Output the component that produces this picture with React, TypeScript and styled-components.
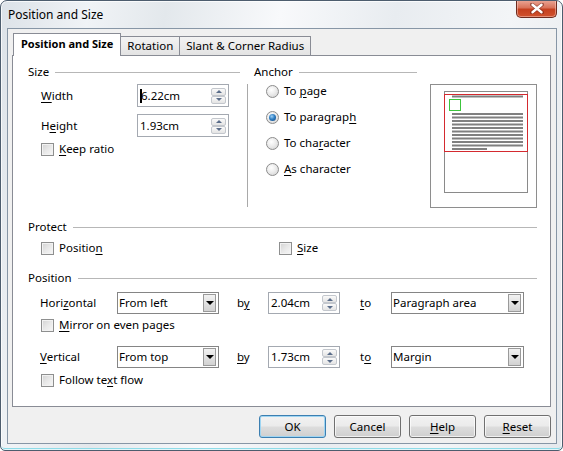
import React from 'react';
import styled, { createGlobalStyle } from 'styled-components';

const GlobalStyle = createGlobalStyle`
  html, body { margin: 0; padding: 0; background: #ffffff; }
  body {
    font-family: "Noto Sans", "Open Sans", sans-serif;
    font-size: 11.5px;
    color: #000;
  }
  * { box-sizing: border-box; }
  u { text-decoration-thickness: 1px; text-underline-offset: 2px; }
`;

const Window = styled.div`
  width: 563px;
  height: 451px;
  border: 1px solid #4d5d6e;
  border-radius: 7px 7px 5px 5px;
  background: linear-gradient(100deg, #dce2e8 0%, #f0f3f6 14%, #e3e8ec 26%, #f8f9fb 44%, #e8ecf0 62%, #f3f5f7 80%, #e5e9ed 100%);
  box-shadow: inset 0 0 0 1px rgba(255, 255, 255, 0.75), inset 0 -2px 0 #8edbe8;
  display: flex;
  flex-direction: column;
  padding: 0 5px 6px 6px;
  overflow: hidden;
`;

const TitleBar = styled.div`
  height: 27px;
  display: flex;
  align-items: flex-start;
  justify-content: space-between;
  padding-left: 1px;
`;

const Title = styled.div`
  margin-top: 6px;
  font-size: 12px;
  line-height: 16px;
  color: #000;
`;

const CloseButton = styled.div`
  width: 41px;
  height: 18px;
  margin-top: -1px;
  border: 1px solid #6e2b1f;
  border-top: none;
  border-radius: 0 0 5px 5px;
  background: linear-gradient(#eba898 0%, #d9735a 45%, #c5401f 55%, #d0522e 100%);
  box-shadow: inset 0 0 0 1px rgba(255, 220, 210, 0.45);
  display: flex;
  align-items: center;
  justify-content: center;
`;

const Client = styled.div`
  flex: 1;
  border: 1px solid #8796a6;
  background: #f0f0f0;
  display: flex;
  flex-direction: column;
  padding: 4px 5px 5px 4px;
`;

const TabRow = styled.div`
  display: flex;
  align-items: flex-end;
  height: 22px;
  padding-left: 1px;
`;

const Tab = styled.div<{ $active?: boolean }>`
  position: relative;
  z-index: ${(p) => (p.$active ? 2 : 1)};
  height: ${(p) => (p.$active ? '23px' : '19px')};
  margin-bottom: ${(p) => (p.$active ? '-1px' : '0')};
  margin-left: ${(p) => (p.$active ? '0' : '-1px')};
  padding: 0 ${(p) => (p.$active ? '7px' : '6px')};
  border: 1px solid #898c95;
  border-bottom: none;
  background: ${(p) => (p.$active ? '#ffffff' : 'linear-gradient(#f3f3f3, #e3e3e3)')};
  font-weight: ${(p) => (p.$active ? 700 : 400)};
  font-size: ${(p) => (p.$active ? '11px' : '11.5px')};
  display: flex;
  align-items: center;
  line-height: 16px;
  white-space: nowrap;
  padding-bottom: ${(p) => (p.$active ? '2px' : '0')};
`;

const Pane = styled.div`
  height: 352px;
  border: 1px solid #898c95;
  background: #ffffff;
  padding: 8px 13px 0 15px;
  display: flex;
  flex-direction: column;
`;

const Header = styled.div<{ $mt?: number }>`
  display: flex;
  align-items: center;
  gap: 6px;
  height: 16px;
  line-height: 16px;
  margin-top: ${(p) => p.$mt ?? 0}px;
  white-space: nowrap;
  &::after {
    content: '';
    flex: 1;
    height: 1px;
    background: #b7b7b7;
  }
`;

const TopArea = styled.div`
  display: flex;
  align-items: flex-start;
  height: 143px;
`;

const SizeColumn = styled.div`
  width: 212px;
  display: flex;
  flex-direction: column;
`;

const FieldRow = styled.div<{ $mt: number }>`
  display: flex;
  align-items: center;
  height: 23px;
  margin-top: ${(p) => p.$mt}px;
`;

const FieldLabel = styled.div<{ $w: number; $pl: number }>`
  width: ${(p) => p.$w}px;
  padding-left: ${(p) => p.$pl}px;
  line-height: 16px;
  white-space: nowrap;
`;

const VSeparator = styled.div`
  width: 1px;
  height: 123px;
  margin: 20px 6px 0 7px;
  background: #a9a9a9;
`;

const AnchorColumn = styled.div`
  width: 163px;
  display: flex;
  flex-direction: column;
`;

const RadioList = styled.div`
  display: flex;
  flex-direction: column;
  gap: 8px;
  margin-top: 2px;
  padding-left: 12px;
`;

const OptionRow = styled.div<{ $mt?: number; $pl?: number }>`
  display: flex;
  align-items: center;
  gap: 5px;
  height: 18px;
  margin-top: ${(p) => p.$mt ?? 0}px;
  padding-left: ${(p) => p.$pl ?? 0}px;
  line-height: 16px;
  white-space: nowrap;
`;

const RadioCircle = styled.span<{ $on?: boolean }>`
  width: 13px;
  height: 13px;
  border-radius: 50%;
  border: 1px solid #8c8c8c;
  background: radial-gradient(circle at 40% 35%, #ffffff 0%, #ececec 45%, #cfcfcf 100%);
  display: flex;
  align-items: center;
  justify-content: center;
  flex: none;
  &::after {
    content: '';
    display: ${(p) => (p.$on ? 'block' : 'none')};
    width: 7px;
    height: 7px;
    border-radius: 50%;
    background: radial-gradient(circle at 40% 35%, #9fd0f5 0%, #2f7fc3 45%, #0f3f7a 100%);
  }
`;

const CheckBox = styled.span`
  width: 13px;
  height: 13px;
  border: 1px solid #8e8f8f;
  background: linear-gradient(135deg, #d2d2d2 0%, #e8e8e8 50%, #f7f7f7 100%);
  box-shadow: inset 0 0 0 1px #f2f2f2;
  flex: none;
`;

const PreviewFrame = styled.div`
  width: 107px;
  height: 124px;
  margin: 20px 0 0 13px;
  border: 1px solid #8e8e8e;
  background: #ffffff;
  display: flex;
`;

const ProtectRow = styled.div`
  display: flex;
  margin-top: 4px;
`;

const ProtectCell = styled.div<{ $w?: number }>`
  width: ${(p) => (p.$w ? `${p.$w}px` : 'auto')};
  padding-left: 13px;
  display: flex;
`;

const PosRow = styled.div<{ $mt: number }>`
  display: flex;
  align-items: center;
  height: 22px;
  margin-top: ${(p) => p.$mt}px;
`;

const SpinBox = styled.div<{ $w: number }>`
  width: ${(p) => p.$w}px;
  height: ${(p) => (p.$w > 80 ? 23 : 22)}px;
  border: 1px solid #a4a9b1;
  background: #ffffff;
  display: flex;
  align-items: center;
  justify-content: space-between;
  padding: 0 2px 0 2px;
  flex: none;
`;

const SpinText = styled.div`
  line-height: 16px;
  display: flex;
  align-items: center;
  white-space: nowrap;
`;

const Caret = styled.span`
  display: inline-block;
  width: 2px;
  height: 14px;
  background: #000;
  margin-right: -1px;
`;

const SpinButtons = styled.div`
  width: 15px;
  height: 16px;
  display: flex;
  flex-direction: column;
`;

const SpinBtn = styled.div`
  flex: 1;
  border: 1px solid #c3c7cd;
  border-radius: 2px;
  background: linear-gradient(#fafafa, #e4e4e4);
  display: flex;
  align-items: center;
  justify-content: center;
`;

const Tri = styled.span<{ $dir: 'up' | 'down'; $size?: number; $color?: string }>`
  width: 0;
  height: 0;
  border-left: ${(p) => p.$size ?? 3}px solid transparent;
  border-right: ${(p) => p.$size ?? 3}px solid transparent;
  ${(p) =>
    p.$dir === 'up'
      ? `border-bottom: ${p.$size ?? 3}px solid ${p.$color ?? '#5a6d8a'};`
      : `border-top: ${p.$size ?? 3}px solid ${p.$color ?? '#5a6d8a'};`}
`;

const DropBox = styled.div<{ $w: number }>`
  width: ${(p) => p.$w}px;
  height: 22px;
  border: 1px solid #858585;
  background: #ffffff;
  display: flex;
  align-items: center;
  justify-content: space-between;
  padding: 0 2px 0 1px;
  flex: none;
  line-height: 16px;
  white-space: nowrap;
`;

const DropBtn = styled.div`
  width: 13px;
  height: 18px;
  border: 1px solid #9a9a9a;
  background: linear-gradient(#f2f2f2, #d2d2d2);
  display: flex;
  align-items: center;
  justify-content: center;
`;

const Word = styled.div<{ $w: number; $pl: number }>`
  width: ${(p) => p.$w}px;
  padding-left: ${(p) => p.$pl}px;
  line-height: 16px;
  flex: none;
`;

const ButtonRow = styled.div`
  display: flex;
  justify-content: flex-end;
  gap: 8px;
  margin-top: 8px;
`;

const DialogButton = styled.div<{ $default?: boolean }>`
  width: 67px;
  height: 23px;
  border: 1px solid ${(p) => (p.$default ? '#3c7fb1' : '#707070')};
  border-radius: 3px;
  background: linear-gradient(#f2f2f2 0%, #ebebeb 48%, #dddddd 52%, #cfcfcf 100%);
  box-shadow: inset 0 0 0 1px ${(p) => (p.$default ? '#9fd5f2' : 'rgba(255,255,255,0.7)')};
  display: flex;
  align-items: center;
  justify-content: center;
  line-height: 16px;
`;

const Spin = ({ value, w, caret }: { value: string; w: number; caret?: boolean }) => (
  <SpinBox $w={w}>
    <SpinText>
      {caret && <Caret />}
      {value}
    </SpinText>
    <SpinButtons>
      <SpinBtn>
        <Tri $dir="up" />
      </SpinBtn>
      <SpinBtn>
        <Tri $dir="down" />
      </SpinBtn>
    </SpinButtons>
  </SpinBox>
);

const Drop = ({ value, w }: { value: string; w: number }) => (
  <DropBox $w={w}>
    <span>{value}</span>
    <DropBtn>
      <Tri $dir="down" $size={4} $color="#000" />
    </DropBtn>
  </DropBox>
);

const Check = ({ children, mt, pl }: { children: React.ReactNode; mt?: number; pl?: number }) => (
  <OptionRow $mt={mt} $pl={pl}>
    <CheckBox />
    <span>{children}</span>
  </OptionRow>
);

const Radio = ({ children, on }: { children: React.ReactNode; on?: boolean }) => (
  <OptionRow>
    <RadioCircle $on={on} />
    <span>{children}</span>
  </OptionRow>
);

const PreviewDrawing = () => {
  const lines = Array.from({ length: 10 }, (_, i) => 28 + i * 3.5);
  return (
    <svg width="105" height="122" viewBox="0 0 105 122">
      <rect x="13.5" y="6.5" width="83" height="101" fill="#fff" stroke="#8a8a8a" />
      <rect x="21" y="10.5" width="71" height="2" fill="#808080" />
      {lines.map((y) => (
        <rect key={y} x="21" y={y} width="71" height="2" fill="#808080" />
      ))}
      <rect x="21" y="63" width="35" height="2" fill="#808080" />
      <rect x="13.5" y="9.5" width="83" height="57" fill="none" stroke="#d42a2f" />
      <rect x="18.5" y="14.5" width="11" height="11" fill="#fff" stroke="#3cc43c" />
    </svg>
  );
};

export default function App() {
  return (
    <>
      <GlobalStyle />
      <Window>
        <TitleBar>
          <Title>Position and Size</Title>
          <CloseButton>
            <svg width="14" height="11" viewBox="0 0 14 11">
              <path d="M2 1.5 L12 9.5 M12 1.5 L2 9.5" stroke="#6b2216" strokeWidth="4" strokeLinecap="round" opacity="0.55" />
              <path d="M2.5 1.8 L11.5 9.2 M11.5 1.8 L2.5 9.2" stroke="#ffffff" strokeWidth="2.4" strokeLinecap="round" />
            </svg>
          </CloseButton>
        </TitleBar>
        <Client>
          <TabRow>
            <Tab $active>Position and Size</Tab>
            <Tab>Rotation</Tab>
            <Tab>Slant &amp; Corner Radius</Tab>
          </TabRow>
          <Pane>
            <TopArea>
              <SizeColumn>
                <Header>Size</Header>
                <FieldRow $mt={4}>
                  <FieldLabel $w={109} $pl={13}>
                    <u>W</u>idth
                  </FieldLabel>
                  <Spin value="6.22cm" w={92} caret />
                </FieldRow>
                <FieldRow $mt={7}>
                  <FieldLabel $w={109} $pl={13}>
                    H<u>e</u>ight
                  </FieldLabel>
                  <Spin value="1.93cm" w={92} />
                </FieldRow>
                <Check mt={3} pl={13}>
                  <u>K</u>eep ratio
                </Check>
              </SizeColumn>
              <VSeparator />
              <AnchorColumn>
                <Header>Anchor</Header>
                <RadioList>
                  <Radio>
                    To <u>p</u>age
                  </Radio>
                  <Radio on>
                    To paragrap<u>h</u>
                  </Radio>
                  <Radio>
                    To cha<u>r</u>acter
                  </Radio>
                  <Radio>
                    <u>A</u>s character
                  </Radio>
                </RadioList>
              </AnchorColumn>
              <PreviewFrame>
                <PreviewDrawing />
              </PreviewFrame>
            </TopArea>
            <Header $mt={12}>Protect</Header>
            <ProtectRow>
              <ProtectCell $w={238}>
                <Check>
                  Positio<u>n</u>
                </Check>
              </ProtectCell>
              <ProtectCell>
                <Check>
                  <u>S</u>ize
                </Check>
              </ProtectCell>
            </ProtectRow>
            <Header $mt={13}>Position</Header>
            <PosRow $mt={6}>
              <FieldLabel $w={89} $pl={12}>
                Hori<u>z</u>ontal
              </FieldLabel>
              <Drop value="From left" w={102} />
              <Word $w={49} $pl={18}>
                b<u>y</u>
              </Word>
              <Spin value="2.04cm" w={72} />
              <Word $w={51} $pl={20}>
                <u>t</u>o
              </Word>
              <Drop value="Paragraph area" w={133} />
            </PosRow>
            <Check mt={2} pl={13}>
              <u>M</u>irror on even pages
            </Check>
            <PosRow $mt={12}>
              <FieldLabel $w={89} $pl={12}>
                <u>V</u>ertical
              </FieldLabel>
              <Drop value="From top" w={102} />
              <Word $w={49} $pl={18}>
                <u>b</u>y
              </Word>
              <Spin value="1.73cm" w={72} />
              <Word $w={51} $pl={20}>
                t<u>o</u>
              </Word>
              <Drop value="Margin" w={133} />
            </PosRow>
            <Check mt={3} pl={13}>
              Follow te<u>x</u>t flow
            </Check>
          </Pane>
          <ButtonRow>
            <DialogButton $default>OK</DialogButton>
            <DialogButton>Cancel</DialogButton>
            <DialogButton>
              <span>
                <u>H</u>elp
              </span>
            </DialogButton>
            <DialogButton>
              <span>
                <u>R</u>eset
              </span>
            </DialogButton>
          </ButtonRow>
        </Client>
      </Window>
    </>
  );
}
